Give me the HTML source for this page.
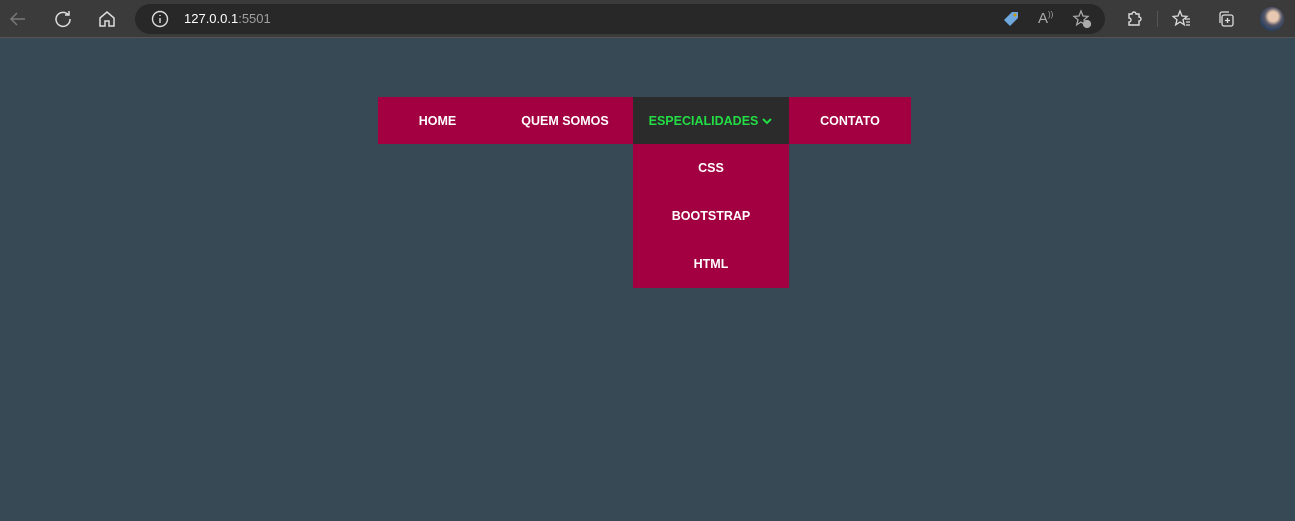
<!DOCTYPE html>
<html><head><meta charset="utf-8"><style>
*{margin:0;padding:0;box-sizing:border-box}
body{width:1295px;height:521px;background:#374954;font-family:"Liberation Sans",sans-serif;position:relative;overflow:hidden}
.bar{position:absolute;left:0;top:0;width:1295px;height:38px;background:#3b3b3b;border-bottom:1px solid #555}
.addr{position:absolute;left:135px;top:4px;width:970px;height:30px;border-radius:15px;background:#282828}
.url{position:absolute;left:184px;top:11px;font-size:13px;color:#fff}
.url span{color:#a0a0a0}
.ic{position:absolute;}
.nav{position:absolute;top:97px;height:47px;background:#a20041;color:#fff;font-weight:bold;font-size:12.5px;display:flex;align-items:center;justify-content:center}
.nav.act{background:#2b2b2b;color:#22dd44}
.dd{position:absolute;left:633px;width:156px;height:48px;background:#a20041;color:#fff;font-weight:bold;font-size:12.5px;display:flex;align-items:center;justify-content:center}
</style></head><body>
<div class="bar"></div>
<svg class="ic" style="left:8px;top:9px" width="20" height="20" viewBox="0 0 20 20" fill="none" stroke="#777" stroke-width="1.5"><path d="M17 10H3M9 4l-6 6 6 6"/></svg>
<svg class="ic" style="left:53px;top:9px" width="20" height="20" viewBox="0 0 20 20" fill="none" stroke="#ddd" stroke-width="1.5"><path d="M15.5 6A7 7 0 1 0 17 10"/><path d="M16 2v4h-4"/></svg>
<svg class="ic" style="left:97px;top:9px" width="20" height="20" viewBox="0 0 20 20" fill="none" stroke="#ddd" stroke-width="1.5"><path d="M3 9l7-6 7 6v8h-5v-5H8v5H3z"/></svg>
<div class="addr"></div>
<svg class="ic" style="left:151px;top:10px" width="18" height="18" viewBox="0 0 18 18" fill="none" stroke="#ddd" stroke-width="1.4"><circle cx="9" cy="9" r="7.5"/><path d="M9 8v5M9 5v1"/></svg>
<div class="url">127.0.0.1<span>:5501</span></div>
<svg class="ic" style="left:1001px;top:9px" width="20" height="20" viewBox="0 0 20 20"><path d="M3 11l8-8h6v6l-8 8z" fill="#6fa8dc"/><circle cx="14" cy="6" r="1.5" fill="#c90"/></svg>
<div class="ic" style="left:1038px;top:10px;color:#aaa;font-size:15px">A<sup style="font-size:8px">))</sup></div>
<svg class="ic" style="left:1072px;top:9px" width="20" height="20" viewBox="0 0 20 20" fill="none" stroke="#aaa" stroke-width="1.3"><path d="M9 2l2 5 5 .4-4 3.4 1.3 5L9 13l-4.3 2.8L6 10.8 2 7.4 7 7z"/><circle cx="15" cy="15" r="3.5" fill="#aaa"/></svg>
<svg class="ic" style="left:1124px;top:9px" width="20" height="20" viewBox="0 0 20 20" fill="none" stroke="#ddd" stroke-width="1.4"><path d="M5 5h3a2 2 0 1 1 4 0h3v3a2 2 0 1 1 0 4v4H5v-3a2 2 0 1 0 0-4z"/></svg>
<div class="ic" style="left:1157px;top:11px;width:1px;height:16px;background:#555"></div>
<svg class="ic" style="left:1172px;top:9px" width="20" height="20" viewBox="0 0 20 20" fill="none" stroke="#ddd" stroke-width="1.3"><path d="M8 2l2 5 5 .4-4 3.4 1.3 5L8 13l-4.3 2.8L5 10.8 1 7.4 6 7zM13 10h5M14 13h4M14 16h4"/></svg>
<svg class="ic" style="left:1216px;top:9px" width="20" height="20" viewBox="0 0 20 20" fill="none" stroke="#ddd" stroke-width="1.3"><rect x="6" y="6" width="11" height="11" rx="2"/><path d="M4 14V5a2 2 0 0 1 2-2h7M11.5 9v5M9 11.5h5"/></svg>
<div class="ic" style="left:1260px;top:7px;width:24px;height:24px;border-radius:50%;background:radial-gradient(circle at 55% 40%,#e8c8b0 0 25%,#556 45%,#2a4060 70%)"></div>

<div class="nav" style="left:378px;width:119px">HOME</div>
<div class="nav" style="left:497px;width:136px">QUEM SOMOS</div>
<div class="nav act" style="left:633px;width:156px">ESPECIALIDADES<svg width="12" height="10" viewBox="0 0 12 10" style="margin-left:3px"><path d="M2 3l4 4 4-4" fill="none" stroke="#22dd44" stroke-width="2"/></svg></div>
<div class="nav" style="left:789px;width:122px">CONTATO</div>
<div class="dd" style="top:144px">CSS</div>
<div class="dd" style="top:192px">BOOTSTRAP</div>
<div class="dd" style="top:240px">HTML</div>
</body></html>
